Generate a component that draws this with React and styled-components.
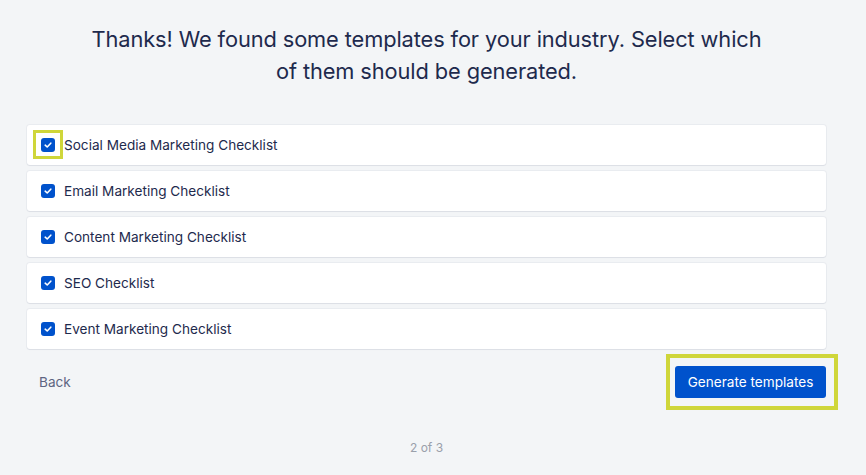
import React, { useState } from "react";
import styled, { createGlobalStyle } from "styled-components";

const GlobalStyle = createGlobalStyle`
  html, body {
    margin: 0;
    padding: 0;
    background: #f3f5f7;
    font-family: Inter, "Noto Sans", sans-serif;
    -webkit-font-smoothing: antialiased;
  }
`;

const Page = styled.div`
  box-sizing: border-box;
  width: 866px;
  height: 475px;
  padding: 23px 40px 0 27px;
  display: flex;
  flex-direction: column;
  align-items: stretch;
`;

const Title = styled.h1`
  margin: 0 auto;
  max-width: 690px;
  font-size: 21.8px;
  line-height: 32px;
  font-weight: 400;
  color: #1e2a4d;
  text-align: center;
  letter-spacing: -0.1px;
`;

const List = styled.div`
  display: flex;
  flex-direction: column;
  gap: 6px;
  margin-top: 38px;
`;

const Row = styled.label`
  display: flex;
  align-items: center;
  height: 40px;
  padding: 0 12px 0 14px;
  background: #fff;
  border-radius: 3px;
  box-shadow: 0 0 0 1px rgba(9, 30, 66, 0.04), 0 1px 1px rgba(9, 30, 66, 0.06);
  font-size: 13.6px;
  color: #1e2a4d;
  cursor: pointer;
`;

const BoxWrap = styled.span`
  position: relative;
  display: inline-flex;
  align-items: center;
  justify-content: center;
  width: 14px;
  height: 14px;
  margin-right: 9px;
  ${(p) =>
    p.$highlight &&
    `
    &::after {
      content: "";
      position: absolute;
      left: -8px;
      top: -8px;
      width: 24px;
      height: 23px;
      border: 3px solid #cfd63a;
      pointer-events: none;
    }
  `}
`;

const Box = styled.span`
  display: inline-flex;
  align-items: center;
  justify-content: center;
  width: 14px;
  height: 14px;
  border-radius: 3px;
  background: ${(p) => (p.$checked ? "#0052cc" : "#fff")};
  border: ${(p) => (p.$checked ? "none" : "2px solid #dfe1e6")};
  box-sizing: border-box;
`;

const Footer = styled.div`
  display: flex;
  align-items: center;
  justify-content: space-between;
  margin-top: 5px;
  padding-left: 12px;
`;

const BackButton = styled.button`
  border: none;
  background: none;
  padding: 0;
  font-family: inherit;
  font-size: 13.6px;
  color: #5e6582;
  cursor: pointer;
`;

const Highlight = styled.div`
  padding: 8px 8px 8px 5px;
  border: 4px solid #cfd63a;
  margin-right: -12px;
`;

const PrimaryButton = styled.button`
  display: block;
  width: 151px;
  height: 32px;
  border: none;
  border-radius: 3px;
  background: #0052cc;
  color: #fff;
  font-family: inherit;
  font-size: 13.6px;
  cursor: pointer;
`;

const Steps = styled.div`
  margin-top: 30px;
  text-align: center;
  font-size: 12px;
  color: #9aa0ab;
`;

const Check = () => (
  <svg width="10" height="10" viewBox="0 0 10 10">
    <path
      d="M2.2 5.2 L4.2 7 L7.8 3.2"
      fill="none"
      stroke="#fff"
      strokeWidth="1.6"
      strokeLinecap="round"
      strokeLinejoin="round"
    />
  </svg>
);

const templates = [
  "Social Media Marketing Checklist",
  "Email Marketing Checklist",
  "Content Marketing Checklist",
  "SEO Checklist",
  "Event Marketing Checklist",
];

export default function App() {
  const [checked, setChecked] = useState(templates.map(() => true));
  const toggle = (i) =>
    setChecked((c) => c.map((v, j) => (j === i ? !v : v)));

  return (
    <>
      <GlobalStyle />
      <Page>
        <Title>
          Thanks! We found some templates for your industry. Select which of
          them should be generated.
        </Title>
        <List>
          {templates.map((t, i) => (
            <Row key={t} onClick={() => toggle(i)}>
              <BoxWrap $highlight={i === 0}>
                <Box $checked={checked[i]}>{checked[i] && <Check />}</Box>
              </BoxWrap>
              {t}
            </Row>
          ))}
        </List>
        <Footer>
          <BackButton>Back</BackButton>
          <Highlight>
            <PrimaryButton>Generate templates</PrimaryButton>
          </Highlight>
        </Footer>
        <Steps>2 of 3</Steps>
      </Page>
    </>
  );
}
